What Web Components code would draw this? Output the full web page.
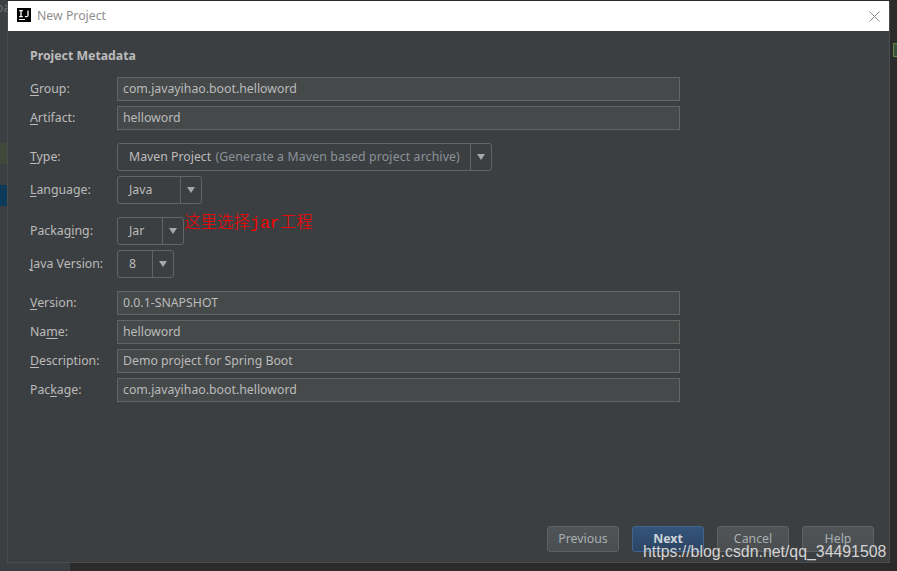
<!DOCTYPE html>
<html>
<head>
<meta charset="utf-8">
<title>New Project</title>
<style>
  html, body { margin: 0; height: 100%; }
  body {
    width: 897px; height: 571px; overflow: hidden;
    background: #2b2b2b;
    font: 12.3px "Noto Sans", "Noto Sans CJK SC", sans-serif;
  }
</style>
</head>
<body>
<project-dialog>
  <form-section>
    <form-row label="Group" mnemonic="0"><text-field>com.javayihao.boot.helloword</text-field></form-row>
    <form-row label="Artifact" mnemonic="0"><text-field>helloword</text-field></form-row>
  </form-section>
  <form-section gap="5" top="13">
    <form-row label="Type" mnemonic="0"><combo-box width="375">Maven Project <span style="color:#8a9299;letter-spacing:.13px;margin-left:1px">(Generate a Maven based project archive)</span></combo-box></form-row>
    <form-row label="Language" mnemonic="0"><combo-box width="85">Java</combo-box></form-row>
  </form-section>
  <form-section gap="5" top="13">
    <form-row label="Packaging" mnemonic="6"><combo-box width="67">Jar</combo-box></form-row>
    <form-row label="Java Version" mnemonic="0"><combo-box width="57">8</combo-box></form-row>
  </form-section>
  <form-section top="13">
    <form-row label="Version" mnemonic="0"><text-field>0.0.1-SNAPSHOT</text-field></form-row>
    <form-row label="Name" mnemonic="2"><text-field>helloword</text-field></form-row>
    <form-row label="Description" mnemonic="0"><text-field>Demo project for Spring Boot</text-field></form-row>
    <form-row label="Package" mnemonic="3"><text-field>com.javayihao.boot.helloword</text-field></form-row>
  </form-section>
  <dialog-button slot="buttons">Previous</dialog-button>
  <dialog-button slot="buttons" primary>Next</dialog-button>
  <dialog-button slot="buttons">Cancel</dialog-button>
  <dialog-button slot="buttons">Help</dialog-button>
</project-dialog>

<script>
class ProjectDialog extends HTMLElement {
  constructor() {
    super();
    this.attachShadow({ mode: 'open' });
  }

  connectedCallback() {
    this.shadowRoot.innerHTML = `
      <style>
        :host {
          display: block;
          position: absolute;
          inset: 0;
          color: #bbbbbb;
        }
        /* blurred IDE behind the dialog */
        .left-strip { position: absolute; left: 0; top: 0; width: 7px; height: 571px; background: #3c3f41; overflow: hidden; }
        .left-strip span { position: absolute; left: -4px; top: 1px; font-size: 12px; line-height: 14px; color: #6f7274; }
        .left-bottom { position: absolute; left: 0; top: 563px; width: 70px; height: 8px; background: #3c3f41; }
        .green { position: absolute; left: 0; top: 143px; width: 7px; height: 21px; background: #3f4a3c; }
        .blue { position: absolute; left: 0; top: 185px; width: 7px; height: 21px; background: #0d3a58; }
        .cursor { position: absolute; left: 893px; top: 43px; width: 3px; height: 12px; background: #3c4f38; border: solid #5f8a4a; border-width: 1px 0 1px 1px; }
        .window {
          position: absolute;
          left: 7px;
          top: 1px;
          width: 883px;
          height: 562px;
          box-sizing: border-box;
          border: solid #4a4d4f;
          border-width: 0 1px 1px;
          background: #3c3f41;
          display: flex;
          flex-direction: column;
        }
        .title {
          flex: none;
          height: 30px;
          background: #fff;
          display: flex;
          align-items: center;
          padding-left: 9px;
          gap: 6px;
          color: #8f8f8f;
          font-size: 12.3px;
        }
        .title span { position: relative; top: -1px; }
        .logo {
          width: 14px; height: 14px;
          margin-bottom: 2px;
          display: block;
          flex: none;
        }
        .close { margin-left: auto; margin-right: 9px; display: block; }
        .content {
          flex: 1;
          display: flex;
          flex-direction: column;
          padding: 15px 9px 10px 22px;
        }
        h2 {
          margin: 0 0 12px;
          font-size: 12.3px;
          line-height: 19px;
          font-weight: 700;
          color: #bbbbbb;
        }
        .buttons {
          margin-top: auto;
          display: flex;
          justify-content: flex-end;
          gap: 13px;
          padding-right: 6px;
        }
        .note {
          position: absolute;
          left: 184px;
          top: 214px;
          color: #ff0000;
          font: 300 16.5px/20px "Liberation Mono", "Noto Sans CJK SC", monospace;
          white-space: nowrap;
        }
        .mark {
          position: absolute;
          left: 643px;
          top: 542px;
          color: #d4d4d4;
          font: 15.87px/20px "Liberation Sans", sans-serif;
          white-space: nowrap;
        }
      </style>
      <div class="left-strip"><span>oa</span></div>
      <div class="left-bottom"></div>
      <div class="green"></div>
      <div class="blue"></div>
      <div class="cursor"></div>
      <div class="window">
        <div class="title">
          <svg class="logo" viewBox="0 0 14 14" aria-hidden="true">
            <rect width="14" height="14" fill="#000"/>
            <rect x="2" y="11" width="6" height="1" fill="#fff"/>
            <path d="M2.2 2.6h3.6M4 2.6v6M2.2 8.6h3.6M11 2.6v4.6c0 1-.6 1.5-1.5 1.5-.6 0-1.1-.2-1.4-.6" fill="none" stroke="#fff" stroke-width="1.3"/>
          </svg>
          <span>New Project</span>
          <svg class="close" width="11" height="11" viewBox="0 0 11 11" aria-hidden="true">
            <path d="M.5.5l10 10M10.5.5l-10 10" stroke="#8a8a8a" stroke-width="1" fill="none"/>
          </svg>
        </div>
        <div class="content">
          <h2>Project Metadata</h2>
          <slot></slot>
          <div class="buttons"><slot name="buttons"></slot></div>
        </div>
      </div>
      <div class="note">这里选择jar工程</div>
      <div class="mark">https://blog.csdn.net/qq_34491508</div>
    `;
  }
}

class FormSection extends HTMLElement {
  constructor() {
    super();
    this.attachShadow({ mode: 'open' });
  }

  connectedCallback() {
    const gap = this.getAttribute('gap') || 5;
    const top = this.getAttribute('top') || 0;
    this.shadowRoot.innerHTML = `
      <style>
        :host { display: flex; flex-direction: column; gap: ${gap}px; margin-top: ${top}px; }
      </style>
      <slot></slot>
    `;
  }
}

class FormRow extends HTMLElement {
  constructor() {
    super();
    this.attachShadow({ mode: 'open' });
  }

  connectedCallback() {
    const label = this.getAttribute('label') || '';
    const pos = Number(this.getAttribute('mnemonic') || 0);
    this.shadowRoot.innerHTML = `
      <style>
        :host { display: flex; align-items: center; }
        label { flex: none; width: 87px; color: #bbbbbb; white-space: nowrap; padding-bottom: 1px; }
        u { text-underline-offset: 2px; }
      </style>
      <label>${label.slice(0, pos)}<u>${label[pos]}</u>${label.slice(pos + 1)}:</label>
      <slot></slot>
    `;
  }
}

class TextField extends HTMLElement {
  constructor() {
    super();
    this.attachShadow({ mode: 'open' });
  }

  connectedCallback() {
    this.shadowRoot.innerHTML = `
      <style>
        :host {
          display: block;
          box-sizing: border-box;
          width: 563px;
          height: 24px;
          line-height: 21px;
          padding-left: 5px;
          background: #45494a;
          border: 1px solid #646464;
          color: #bbbbbb;
        }
      </style>
      <slot></slot>
    `;
  }
}

class ComboBox extends HTMLElement {
  constructor() {
    super();
    this.attachShadow({ mode: 'open' });
  }

  connectedCallback() {
    const width = this.getAttribute('width') || 80;
    this.shadowRoot.innerHTML = `
      <style>
        :host {
          display: flex;
          box-sizing: border-box;
          width: ${width}px;
          height: 28px;
          border: 1px solid #646464;
          border-radius: 3px;
          background: #3c3f41;
          color: #bbbbbb;
        }
        .value { flex: 1; min-width: 0; padding-left: 11px; line-height: 25px; white-space: nowrap; }
        .arrow {
          flex: none;
          width: 20px;
          border-left: 1px solid #646464;
          display: flex;
          align-items: center;
          justify-content: center;
        }
        .arrow i {
          width: 0; height: 0;
          border: solid transparent;
          border-width: 6px 4.5px 0;
          border-top-color: #a8a8a8;
        }
      </style>
      <div class="value"><slot></slot></div>
      <div class="arrow"><i></i></div>
    `;
  }
}

class DialogButton extends HTMLElement {
  constructor() {
    super();
    this.attachShadow({ mode: 'open' });
  }

  connectedCallback() {
    this.shadowRoot.innerHTML = `
      <style>
        :host {
          display: block;
          box-sizing: border-box;
          width: 72px;
          height: 26px;
          line-height: 23px;
          text-align: center;
          border: 1px solid #5e6264;
          border-radius: 3px;
          background: linear-gradient(#505456, #4a4e50);
          color: #a9b0b3;
        }
        :host([primary]) {
          border-color: #43648a;
          background: linear-gradient(#34557c, #2c4463);
          color: #d0d4d8;
          font-weight: 700;
        }
      </style>
      <slot></slot>
    `;
  }
}

customElements.define('project-dialog', ProjectDialog);
customElements.define('form-section', FormSection);
customElements.define('form-row', FormRow);
customElements.define('text-field', TextField);
customElements.define('combo-box', ComboBox);
customElements.define('dialog-button', DialogButton);
</script>
</body>
</html>
